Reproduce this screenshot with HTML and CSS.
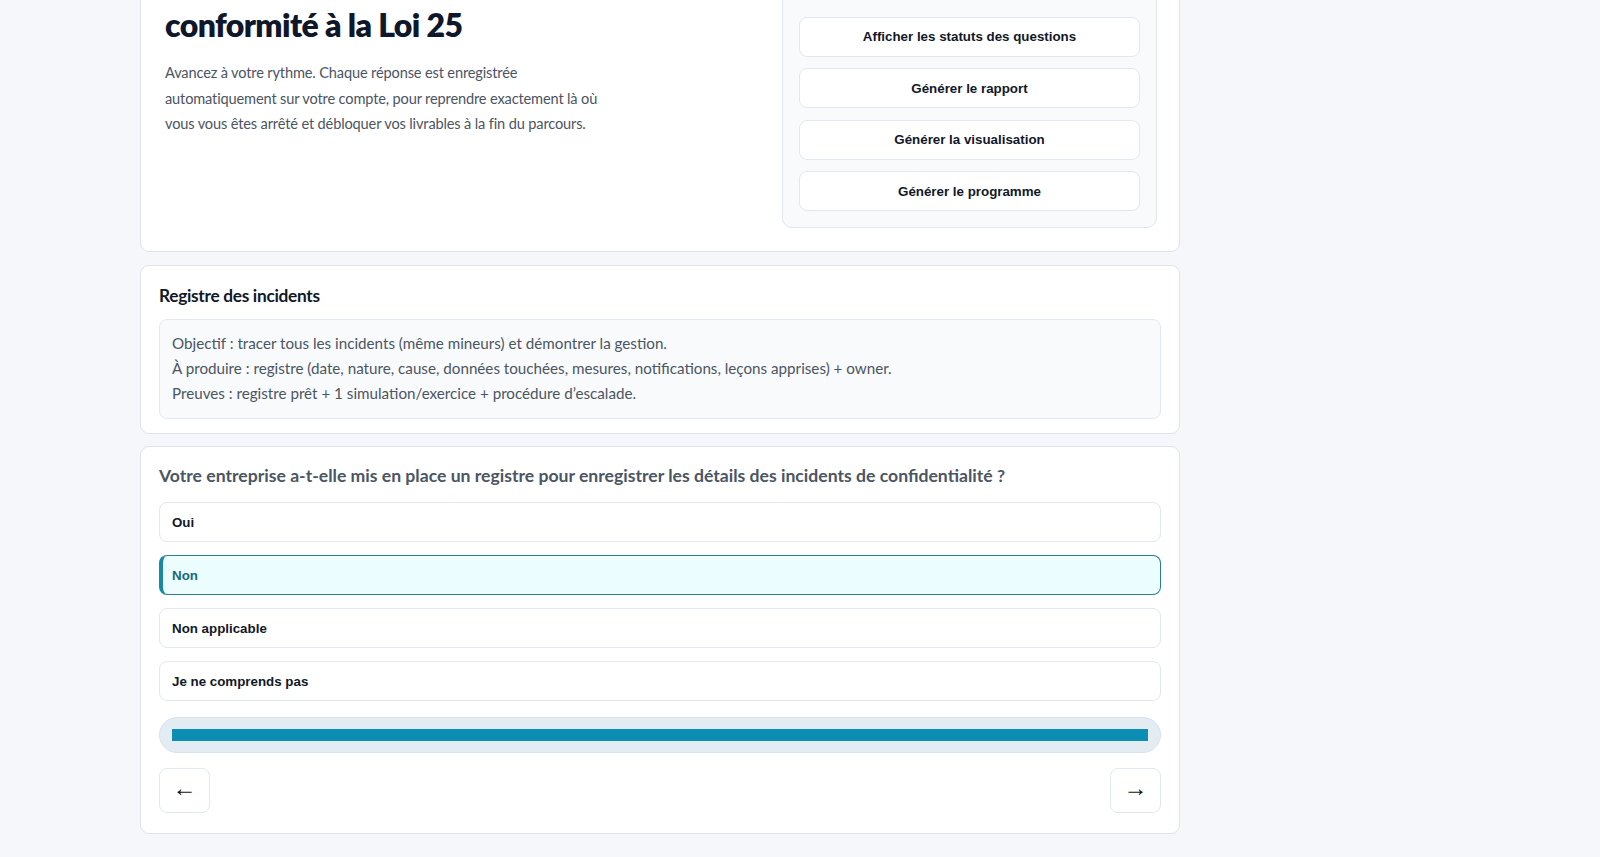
FILE: index.html
```html
<!DOCTYPE html>
<html lang="fr">
<head>
    <meta charset="UTF-8">
    <meta name="viewport" content="width=device-width, initial-scale=1.0">
    <title>Conformité Loi 25</title>
    <link rel="stylesheet" href="styles.css">
</head>
<body>
    <div class="page">
        <section class="card hero">
            <div class="hero-text">
                <h1>Évaluez votre<br>conformité à la Loi 25</h1>
                <p>Avancez à votre rythme. Chaque réponse est enregistrée automatiquement sur votre compte, pour reprendre exactement là où vous vous êtes arrêté et débloquer vos livrables à la fin du parcours.</p>
            </div>
            <div class="tools">
                <div class="tools-label">progression et rapports</div>
                <button class="tool-btn">Afficher les statuts des questions</button>
                <button class="tool-btn">Générer le rapport</button>
                <button class="tool-btn">Générer la visualisation</button>
                <button class="tool-btn">Générer le programme</button>
            </div>
        </section>

        <section class="card section-card">
            <h2>Registre des incidents</h2>
            <div class="section-info">
                Objectif : tracer tous les incidents (même mineurs) et démontrer la gestion.<br>
                À produire : registre (date, nature, cause, données touchées, mesures, notifications, leçons apprises) + owner.<br>
                Preuves : registre prêt + 1 simulation/exercice + procédure d’escalade.
            </div>
        </section>

        <section class="card question-card">
            <h3>Votre entreprise a-t-elle mis en place un registre pour enregistrer les détails des incidents de confidentialité ?</h3>
            <div class="options">
                <button class="option">Oui</button>
                <button class="option selected">Non</button>
                <button class="option">Non applicable</button>
                <button class="option">Je ne comprends pas</button>
            </div>
            <div class="progress">
                <div class="progress-bar" style="width: 100%"></div>
            </div>
            <div class="nav">
                <button class="nav-btn">&larr;</button>
                <button class="nav-btn">&rarr;</button>
            </div>
        </section>
    </div>
</body>
</html>
```

FILE: styles.css
```css
body {
    margin: 0;
    background-color: #f5f7fa;
    font-family: Lato, "Noto Sans", sans-serif;
    color: #111827;
}
.page {
    width: 1040px;
    margin-left: 140px;
    margin-top: -55px;
    display: flex;
    flex-direction: column;
    gap: 12.5px;
    padding-bottom: 40px;
}
.card {
    background-color: #fff;
    border: 1px solid #dde4eb;
    border-radius: 9px;
}
.hero {
    display: flex;
    justify-content: space-between;
    align-items: flex-start;
    padding: 24px 22px 23px 24px;
}
.hero h1 {
    margin: -2px 0 0;
    font-size: 32px;
    line-height: 38px;
    font-weight: 800;
    letter-spacing: -0.6px;
    color: #0f172a;
}
.hero p {
    margin: 16px 0 0;
    max-width: 445px;
    font-size: 14.6px;
    line-height: 25.5px;
    letter-spacing: -0.15px;
    color: #4b5563;
}
.tools {
    width: 341px;
    padding: 16px;
    background-color: #f8fafc;
    border: 1px solid #e2e8f0;
    border-radius: 10px;
    display: flex;
    flex-direction: column;
    gap: 11.6px;
}
.tools-label {
    font-size: 13px;
    line-height: 13px;
    color: #6b7280;
    margin-bottom: 5px;
}
.tool-btn, .option, .nav-btn {
    font-family: "Liberation Sans", Arial, sans-serif;
    font-size: 13.33px;
    font-weight: bold;
    color: #111827;
    background-color: #fff;
    border: 1px solid #e2e8f0;
    border-radius: 8px;
    cursor: pointer;
}
.tool-btn {
    height: 40px;
}
.section-card {
    padding: 18px 18px 14px 18px;
}
.section-card h2 {
    margin: 0 0 11px;
    font-size: 17.3px;
    line-height: 24px;
    font-weight: 700;
    letter-spacing: -0.3px;
}
.section-info {
    padding: 11.5px 12px;
    background-color: #f8fafc;
    border: 1px solid #e2e8f0;
    border-radius: 8px;
    font-size: 15.2px;
    line-height: 25px;
    color: #4b5563;
}
.question-card {
    padding: 17px 18px 20px 18px;
}
.question-card h3 {
    margin: 0 0 14px;
    font-size: 17.6px;
    line-height: 24px;
    font-weight: 700;
    color: #4b5563;
}
.options {
    display: flex;
    flex-direction: column;
    gap: 13px;
}
.option {
    height: 40px;
    text-align: left;
    padding: 0 12px;
}
.option.selected {
    background-color: #ebfdff;
    border-color: #2a7f86;
    border-left: 4px solid #1889a3;
    padding-left: 9px;
    color: #17687c;
}
.progress {
    margin-top: 16px;
    height: 12px;
    padding: 11px 12px;
    background-color: #e3ebf3;
    border: 1px solid #d9e3ec;
    border-radius: 18px;
}
.progress-bar {
    height: 12px;
    background-color: #0c8db3;
}
.nav {
    margin-top: 15px;
    display: flex;
    justify-content: space-between;
}
.nav-btn {
    width: 51px;
    height: 45px;
    padding: 0 0 5px;
    font-size: 24px;
    font-weight: normal;
    color: #111;
}
```
